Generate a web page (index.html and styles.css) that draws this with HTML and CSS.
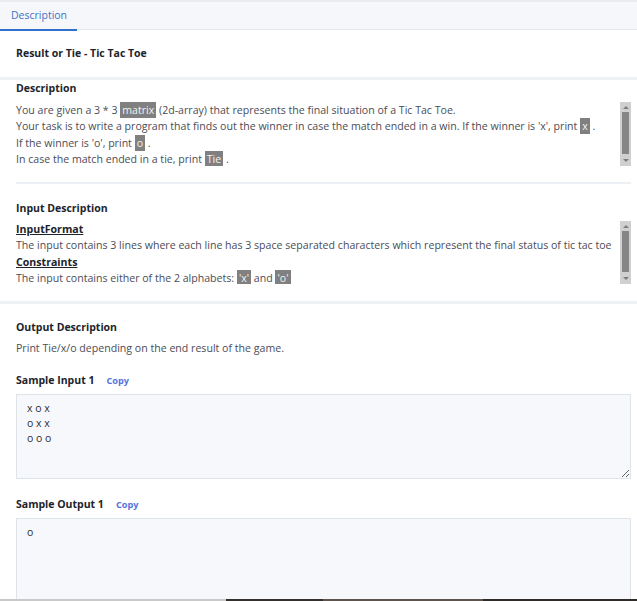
FILE: index.html
```html
<!DOCTYPE html>
<html>
<head>
<meta charset="utf-8">
<link rel="stylesheet" href="styles.css">
</head>
<body>
<div class="page">
  <div class="tabs">
    <div class="tab active">Description</div>
  </div>
  <div class="title-sec">
    <h1 class="title">Result or Tie - Tic Tac Toe</h1>
  </div>
  <div class="band"></div>
  <div class="sec">
    <h2 class="head">Description</h2>
    <div class="scroll scroll-desc">
      <div class="scroll-body">
        <p class="line">You are given a 3 * 3 <code class="hl">matrix</code> (2d-array) that represents the final situation of a Tic Tac Toe.</p>
        <p class="line">Your task is to write a program that finds out the winner in case the match ended in a win. If the winner is 'x', print <code class="hl">x</code> .</p>
        <p class="line">If the winner is 'o', print <code class="hl">o</code> .</p>
        <p class="line">In case the match ended in a tie, print <code class="hl">Tie</code> .</p>
      </div>
      <div class="sbar"><span class="arr arr-up"></span><span class="thumb"></span><span class="arr arr-down"></span></div>
    </div>
    <div class="rule"></div>
    <h2 class="head head-2">Input Description</h2>
    <div class="scroll scroll-input">
      <div class="scroll-body">
        <p class="line sub">InputFormat</p>
        <p class="line">The input contains 3 lines where each line has 3 space separated characters which represent the final status of tic tac toe</p>
        <p class="line sub">Constraints</p>
        <p class="line">The input contains either of the 2 alphabets: <code class="hl">'x'</code> and <code class="hl">'o'</code></p>
      </div>
      <div class="sbar"><span class="arr arr-up"></span><span class="thumb"></span><span class="arr arr-down"></span></div>
    </div>
  </div>
  <div class="band band-2"></div>
  <div class="sec out">
    <h2 class="head">Output Description</h2>
    <p class="line out-text">Print Tie/x/o depending on the end result of the game.</p>
    <div class="sample-head"><span class="sample-title">Sample Input 1</span><span class="copy">Copy</span></div>
    <textarea class="box box-in" readonly>x o x
o x x
o o o</textarea>
    <div class="sample-head sample-head-2"><span class="sample-title">Sample Output 1</span><span class="copy">Copy</span></div>
    <textarea class="box box-out" readonly>o</textarea>
  </div>
  <div class="bottom-bar">
    <span class="bb bb1"></span><span class="bb bb2"></span><span class="bb bb3"></span><span class="bb bb4"></span>
  </div>
</div>
</body>
</html>
```
FILE: styles.css
```css
* { box-sizing: border-box; }
html, body {
  margin: 0;
  padding: 0;
  height: 601px;
  overflow: hidden;
  background: #ffffff;
}
body {
  font-family: "Open Sans", "Noto Sans", sans-serif;
  font-size: 10.6px;
  color: #4b4d57;
}
.page {
  height: 601px;
  display: flex;
  flex-direction: column;
  position: relative;
  border-top: 2px solid #e9ebef;
}
.tabs {
  display: flex;
  height: 28px;
  background: #f6f7fb;
  border-bottom: 1px solid #e4e7ee;
}
.tab {
  width: 77px;
  padding-left: 11px;
  line-height: 27px;
  font-size: 10.5px;
  color: #3f72c6;
  background: #f6f7fb;
  border-bottom: 2px solid #2f6fce;
  height: 29px;
}
.title-sec {
  padding: 15px 16px 16px;
}
.title {
  margin: 0;
  font-size: 10.5px;
  font-weight: 700;
  line-height: 16px;
  color: #20232b;
}
.band {
  height: 3px;
  background: #edf0f4;
  flex: none;
}
.sec {
  padding: 0 6px 0 16px;
}
.head {
  margin: 0;
  font-size: 10.5px;
  font-weight: 700;
  line-height: 16px;
  color: #20232b;
}
.head-2 { margin-top: 16px; }
.scroll {
  display: flex;
  margin-top: 6px;
  overflow: hidden;
}
.scroll-desc { height: 64px; }
.scroll-input { height: 63px; margin-top: 5px; }
.scroll-body {
  flex: 1;
  min-width: 0;
  overflow: hidden;
}
.sbar {
  width: 11px;
  flex: none;
  background: #d0d0d0;
  display: flex;
  flex-direction: column;
  align-items: center;
}
.arr {
  height: 10px;
  flex: none;
  display: flex;
  align-items: center;
  justify-content: center;
}
.arr::before {
  content: "";
  width: 0;
  height: 0;
  border-left: 3px solid transparent;
  border-right: 3px solid transparent;
}
.arr-up::before { border-bottom: 3px solid #7d7d7d; }
.arr-down { height: 12px; }
.arr-down::before { border-top: 3px solid #7d7d7d; }
.thumb {
  flex: 1;
  width: 7px;
  background: #868686;
}
.line {
  margin: 0;
  line-height: 16.3px;
  white-space: nowrap;
}
.sub {
  font-weight: 700;
  color: #20232b;
  text-decoration: underline;
}
.hl {
  font-family: "Open Sans", "Noto Sans", sans-serif;
  font-size: 10.6px;
  background: #808080;
  color: #f2f2f2;
  padding: 1px 2px;
}
.rule {
  height: 2px;
  background: #edf0f4;
  margin-top: 16px;
}
.band-2 { margin-top: 17px; }
.out .head { margin-top: 15px; }
.out-text { margin-top: 5px; line-height: 16px; }
.sample-head {
  display: flex;
  align-items: center;
  gap: 12px;
  margin-top: 16px;
  height: 16px;
}
.sample-head-2 { margin-top: 17px; }
.sample-title {
  font-weight: 700;
  color: #20232b;
  font-size: 10.5px;
}
.copy {
  font-weight: 700;
  color: #5373e0;
  font-size: 9.2px;
}
.box {
  display: block;
  width: 100%;
  margin-top: 6px;
  background: #f6f8fc;
  border: 1px solid #dfe3ea;
  border-radius: 0;
  resize: vertical;
  outline: none;
  font-family: "Open Sans", "Noto Sans", sans-serif;
  font-size: 10.5px;
  line-height: 15px;
  color: #2e2e33;
  padding: 6px 10px;
  overflow: hidden;
}
.box-in { height: 85px; }
.box-out { height: 100px; flex: none; }
.bottom-bar {
  position: absolute;
  left: 0;
  right: 0;
  bottom: 0;
  height: 2px;
  display: flex;
}
.bb { height: 2px; }
.bb1 { width: 226px; background: #c9c9c9; }
.bb2 { width: 97px; background: #34302d; }
.bb3 { width: 160px; background: #5d554d; }
.bb4 { flex: 1; background: #2f2b28; }
```
